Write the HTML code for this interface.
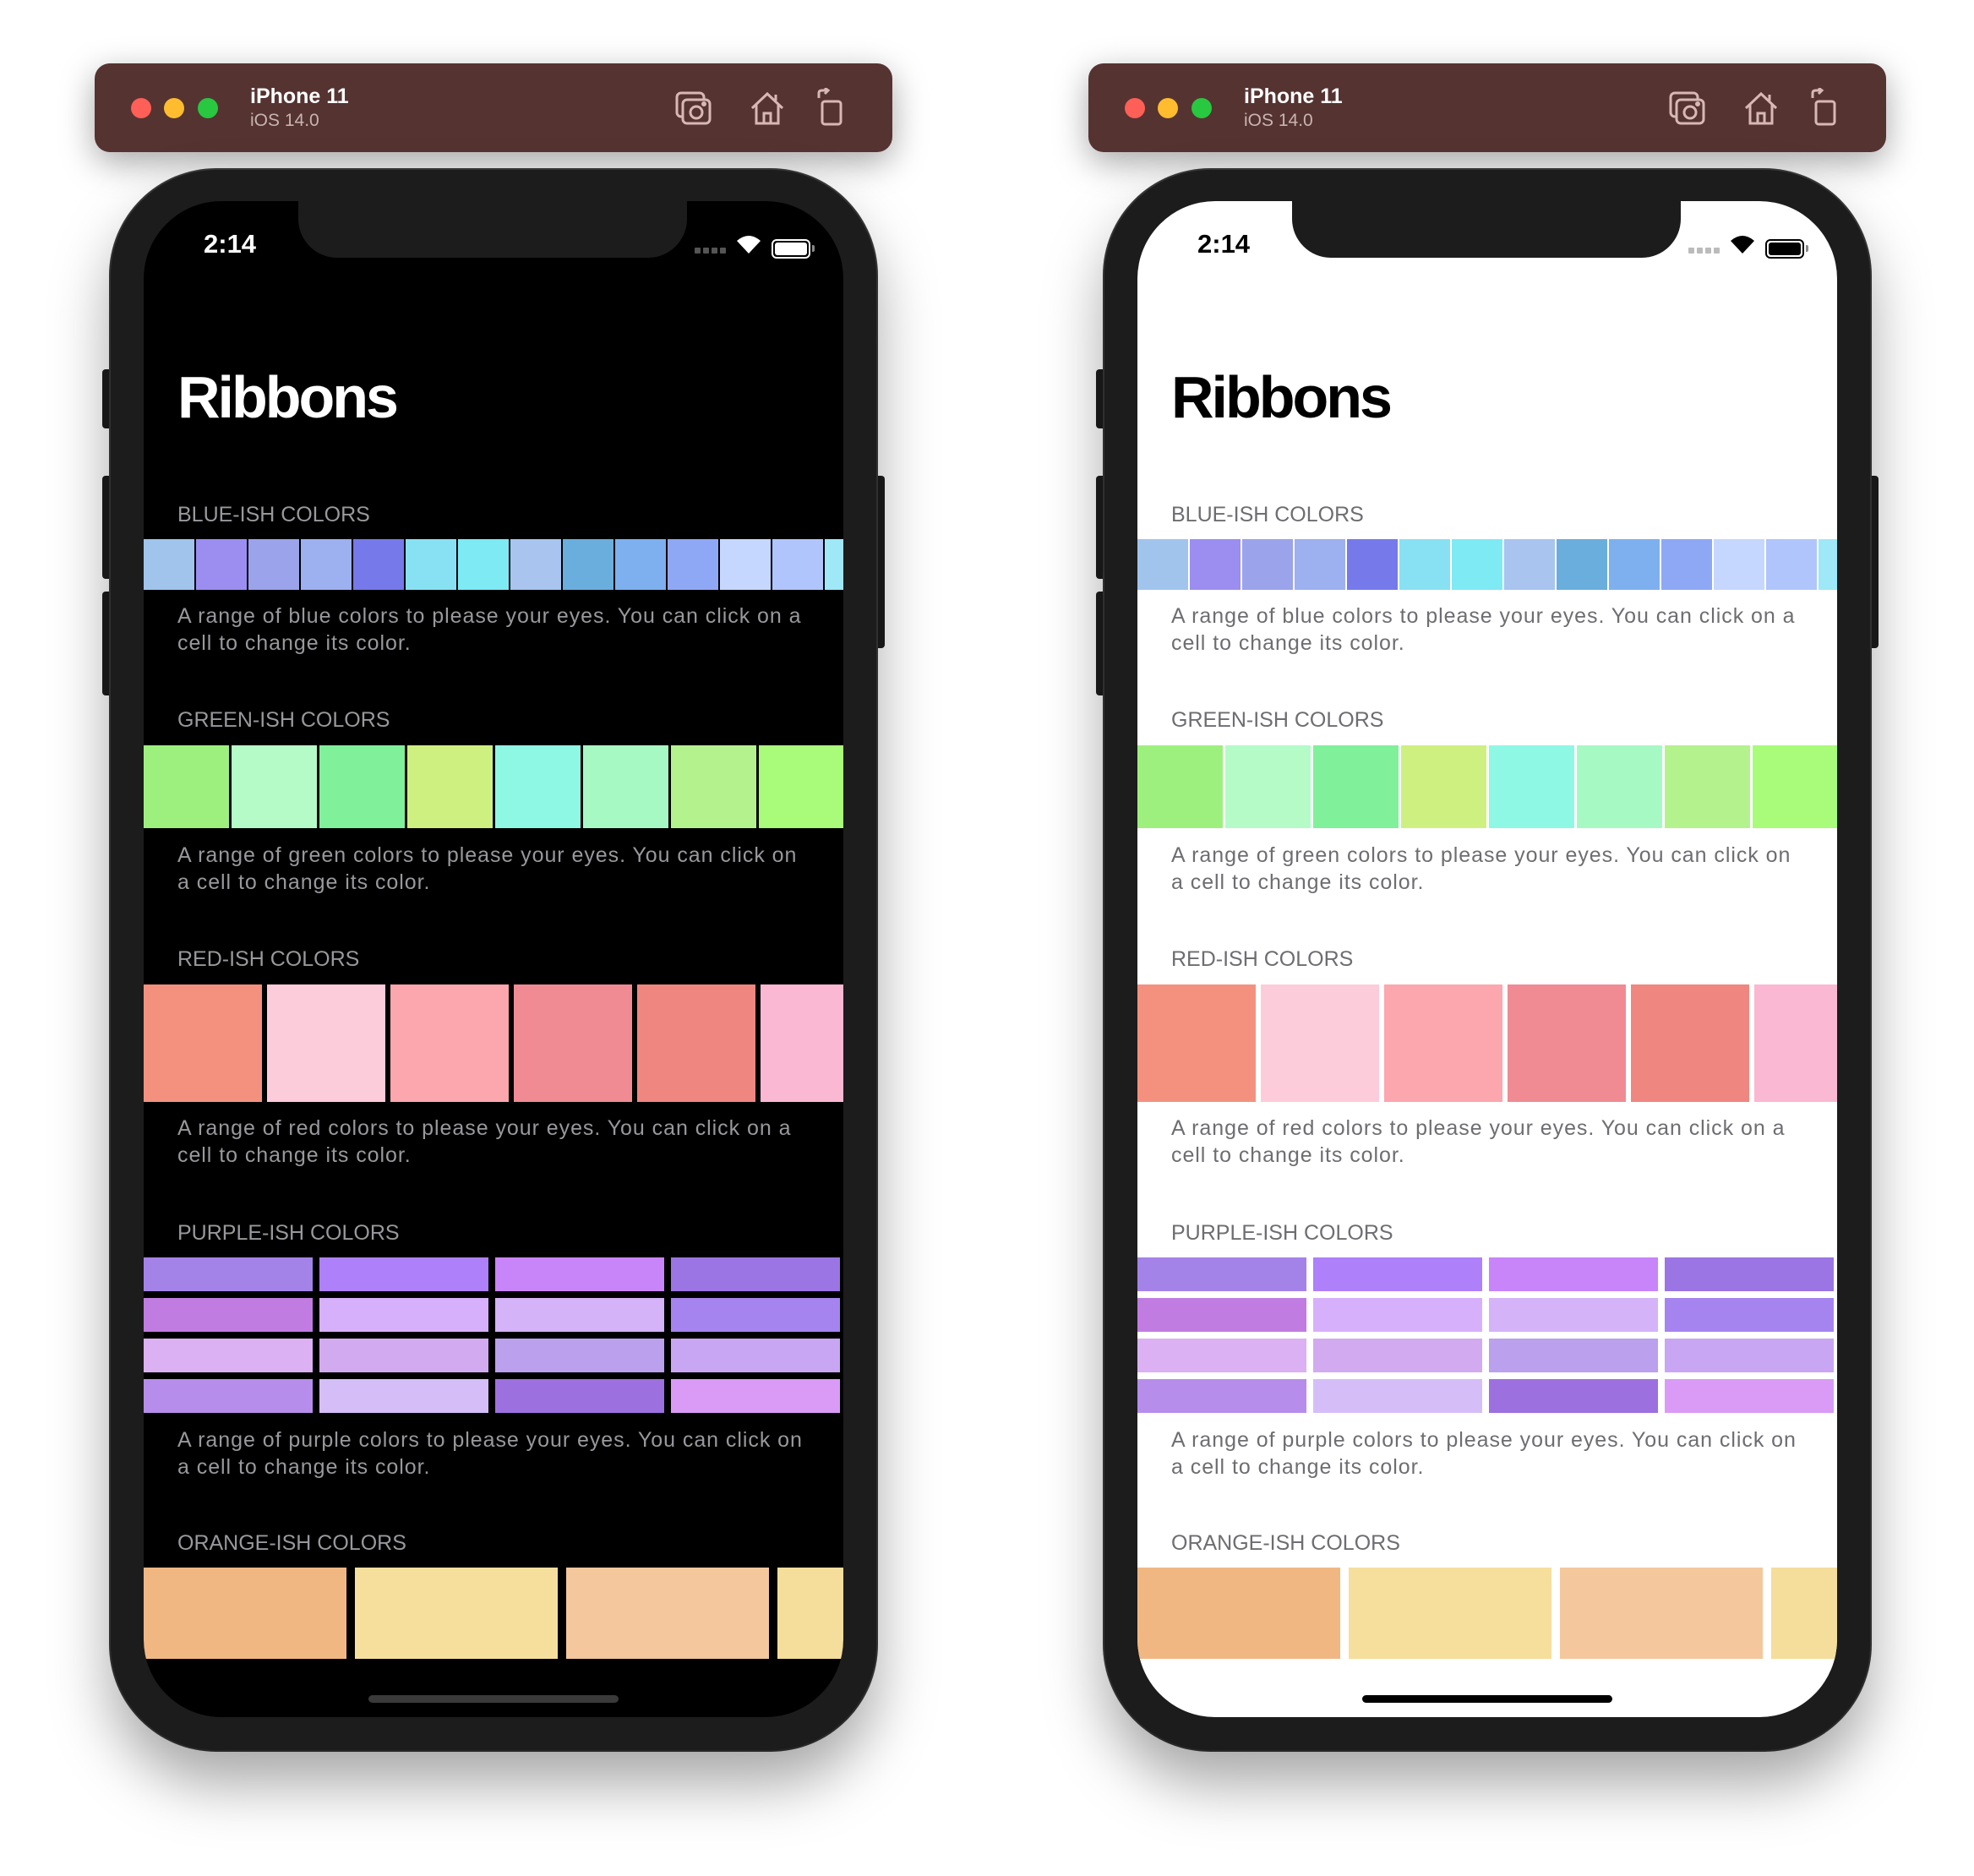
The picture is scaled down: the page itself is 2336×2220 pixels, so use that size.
<!DOCTYPE html>
<html><head><meta charset="utf-8">
<style>
*{margin:0;padding:0;box-sizing:border-box}
body{width:2336px;height:2220px;background:#fff;position:relative;overflow:hidden;font-family:"Liberation Sans",sans-serif}
.wrap{position:absolute;top:0;width:1100px;height:2220px}
.tb{position:absolute;left:112px;top:75px;width:944px;height:105px;background:#553331;border-radius:18px;box-shadow:0 12px 40px rgba(0,0,0,.35)}
.dot{position:absolute;top:116px;width:24px;height:24px;border-radius:50%}
.tname{position:absolute;left:296px;top:100px;color:#fff;font-weight:bold;font-size:25px}
.tos{position:absolute;left:296px;top:131px;color:#c9b4b1;font-size:21px}
.btn{position:absolute;background:#1c1c1c;border-radius:4px}
.body{position:absolute;left:131px;top:201px;width:906px;height:1870px;background:#1c1c1c;border-radius:125px;box-shadow:0 40px 70px rgba(0,0,0,.35),0 0 0 2px #3a3a3a}
.screen{position:absolute;left:170px;top:238px;width:828px;height:1794px;border-radius:92px;overflow:hidden}
.dark .screen{background:#000}
.light .screen{background:#fff}
.notch{position:absolute;left:183px;top:0;width:460px;height:67px;background:#1c1c1c;border-radius:0 0 46px 46px}
.time{position:absolute;left:71px;top:36px;font-size:31px;font-weight:bold;line-height:30px}
.title{position:absolute;left:40px;top:196px;font-size:70px;font-weight:bold;line-height:73px;letter-spacing:-3px}
.hd{position:absolute;left:40px;font-size:25px;line-height:30px}
.ds{position:absolute;left:40px;font-size:25px;line-height:32px;white-space:nowrap;letter-spacing:0.95px}
.dark .time,.dark .title{color:#fff}
.light .time,.light .title{color:#000}
.dark .hd,.dark .ds{color:#98989d}
.light .hd,.light .ds{color:#6d6d72}
.row{position:absolute;left:0;display:flex;white-space:nowrap}
.row div{flex:none}
.home{position:absolute;left:266px;top:1768px;width:296px;height:9px;border-radius:5px}
.dark .home{background:#3a3a3a}
.light .home{background:#000}
.dark .fg{fill:#fff}.light .fg{fill:#000}
.bat{position:absolute;left:743px;top:45px;width:46px;height:23px;border-width:2px;border-style:solid;border-radius:6px;padding:2px}
.dark .bat{border-color:#fff!important}.light .bat{border-color:#000!important}
.dark .batin{background:#fff}.light .batin{background:#000}
.sig i{display:block;width:7px;height:7px;border-radius:1px}
.dark .sig i{background:#555}.light .sig i{background:#bbb}
</style></head><body>

<div class="wrap dark" style="left:0" id="L"></div>
<div class="wrap light" style="left:1176px" id="R"></div>

<template id="tpl">
 <div class="tb"></div>
 <div class="dot" style="left:155px;background:#fe5f57"></div>
 <div class="dot" style="left:194px;background:#febc2e"></div>
 <div class="dot" style="left:234px;background:#28c840"></div>
 <div class="tname">iPhone 11</div>
 <div class="tos">iOS 14.0</div>
 <svg style="position:absolute;left:798px;top:106px" width="46" height="46" viewBox="0 0 46 46" fill="none" stroke="#d8b8b4" stroke-width="3"><rect x="3" y="4" width="32" height="28" rx="5"/><rect x="10" y="12" width="32" height="28" rx="5" fill="#553331"/><circle cx="26" cy="27" r="7"/><circle cx="35" cy="17" r="1.5" fill="#d8b8b4"/></svg>
 <svg style="position:absolute;left:886px;top:106px" width="44" height="44" viewBox="0 0 44 44" fill="none" stroke="#d8b8b4" stroke-width="3"><path d="M4 22 L22 5 L40 22"/><path d="M9 18 V40 H35 V18"/><rect x="18" y="28" width="8" height="12"/><path d="M32 6 V13"/></svg>
 <svg style="position:absolute;left:965px;top:104px" width="36" height="46" viewBox="0 0 36 46" fill="none" stroke="#d8b8b4" stroke-width="3"><rect x="8" y="16" width="22" height="27" rx="3"/><path d="M4 12 V6 Q4 3 8 3 H14"/><path d="M11 0 L15 3 L11 7"/></svg>
 <div class="btn" style="left:121px;top:437px;width:12px;height:70px"></div>
 <div class="btn" style="left:121px;top:563px;width:12px;height:122px"></div>
 <div class="btn" style="left:121px;top:700px;width:12px;height:123px"></div>
 <div class="btn" style="left:1035px;top:563px;width:12px;height:204px"></div>
 <div class="body"></div>
 <div class="screen">
  <div class="notch"></div>
  <div class="time">2:14</div>
  <div class="sig" style="position:absolute;left:652px;top:55px;display:flex;gap:3px"><i></i><i></i><i></i><i></i></div>
  <svg style="position:absolute;left:700px;top:38px" width="32" height="26" viewBox="0 0 32 26"><path class="fg" d="M16 24 L2 9 Q16 -3 30 9 Z"/></svg>
  <div class="bat"><div class="batin" style="width:100%;height:100%;border-radius:3px"></div></div>
  <div style="position:absolute;left:791px;top:52px;width:3px;height:8px;background:#888;border-radius:0 2px 2px 0"></div>
  <div class="title">Ribbons</div>
  <div class="hd" style="top:356px">BLUE-ISH COLORS</div>
  <div class="row" style="top:400px;height:60px;gap:2px"><div style="width:60px;background:#a0c4ec"></div><div style="width:60px;background:#9b8ef0"></div><div style="width:60px;background:#9ba3ea"></div><div style="width:60px;background:#9db0f0"></div><div style="width:60px;background:#7579ea"></div><div style="width:60px;background:#88e1f2"></div><div style="width:60px;background:#7eeaf4"></div><div style="width:60px;background:#a8c4ef"></div><div style="width:60px;background:#6aaedd"></div><div style="width:60px;background:#7eb0ef"></div><div style="width:60px;background:#8fa8f6"></div><div style="width:60px;background:#c5d7fe"></div><div style="width:60px;background:#afc5fc"></div><div style="width:60px;background:#9ee8f7"></div></div>
  <div class="ds" style="top:475px">A range of blue colors to please your eyes. You can click on a<br>cell to change its color.</div>
  <div class="hd" style="top:599px">GREEN-ISH COLORS</div>
  <div class="row" style="top:644px;height:98px;gap:3px"><div style="width:101px;background:#9ef07e"></div><div style="width:101px;background:#b4fbc8"></div><div style="width:101px;background:#80f09a"></div><div style="width:101px;background:#cef081"></div><div style="width:101px;background:#8ff8e4"></div><div style="width:101px;background:#a7f9c4"></div><div style="width:101px;background:#b4f28e"></div><div style="width:110px;background:#a9fc7a"></div></div>
  <div class="ds" style="top:758px">A range of green colors to please your eyes. You can click on<br>a cell to change its color.</div>
  <div class="hd" style="top:882px">RED-ISH COLORS</div>
  <div class="row" style="top:927px;height:139px;gap:6px"><div style="width:140px;background:#f4917e"></div><div style="width:140px;background:#fdccda"></div><div style="width:140px;background:#fca6ad"></div><div style="width:140px;background:#f08b93"></div><div style="width:140px;background:#f08680"></div><div style="width:140px;background:#fbb8d2"></div></div>
  <div class="ds" style="top:1081px">A range of red colors to please your eyes. You can click on a<br>cell to change its color.</div>
  <div class="hd" style="top:1206px">PURPLE-ISH COLORS</div>
  <div class="row" style="top:1250px;height:40px;gap:8px"><div style="width:200px;background:#a483e8"></div><div style="width:200px;background:#ae80fa"></div><div style="width:200px;background:#c884f9"></div><div style="width:200px;background:#9a75e3"></div></div>
  <div class="row" style="top:1298px;height:40px;gap:8px"><div style="width:200px;background:#c17ce2"></div><div style="width:200px;background:#d7b0fb"></div><div style="width:200px;background:#d4b3f8"></div><div style="width:200px;background:#a684f0"></div></div>
  <div class="row" style="top:1346px;height:40px;gap:8px"><div style="width:200px;background:#dbb1f3"></div><div style="width:200px;background:#d2aaf0"></div><div style="width:200px;background:#bba0ee"></div><div style="width:200px;background:#c8a6f3"></div></div>
  <div class="row" style="top:1394px;height:40px;gap:8px"><div style="width:200px;background:#b78deb"></div><div style="width:200px;background:#d5bef8"></div><div style="width:200px;background:#9d70e0"></div><div style="width:200px;background:#d99bf6"></div></div>
  <div class="ds" style="top:1450px">A range of purple colors to please your eyes. You can click on<br>a cell to change its color.</div>
  <div class="hd" style="top:1573px">ORANGE-ISH COLORS</div>
  <div class="row" style="top:1617px;height:108px;gap:10px"><div style="width:240px;background:#f1b783"></div><div style="width:240px;background:#f6de9d"></div><div style="width:240px;background:#f4c79c"></div><div style="width:240px;background:#f5dd9b"></div></div>
  <div class="home"></div>
 </div>
</template>
<script>
var t=document.getElementById('tpl').innerHTML;
document.getElementById('L').innerHTML=t;
document.getElementById('R').innerHTML=t;
</script>
</body></html>
